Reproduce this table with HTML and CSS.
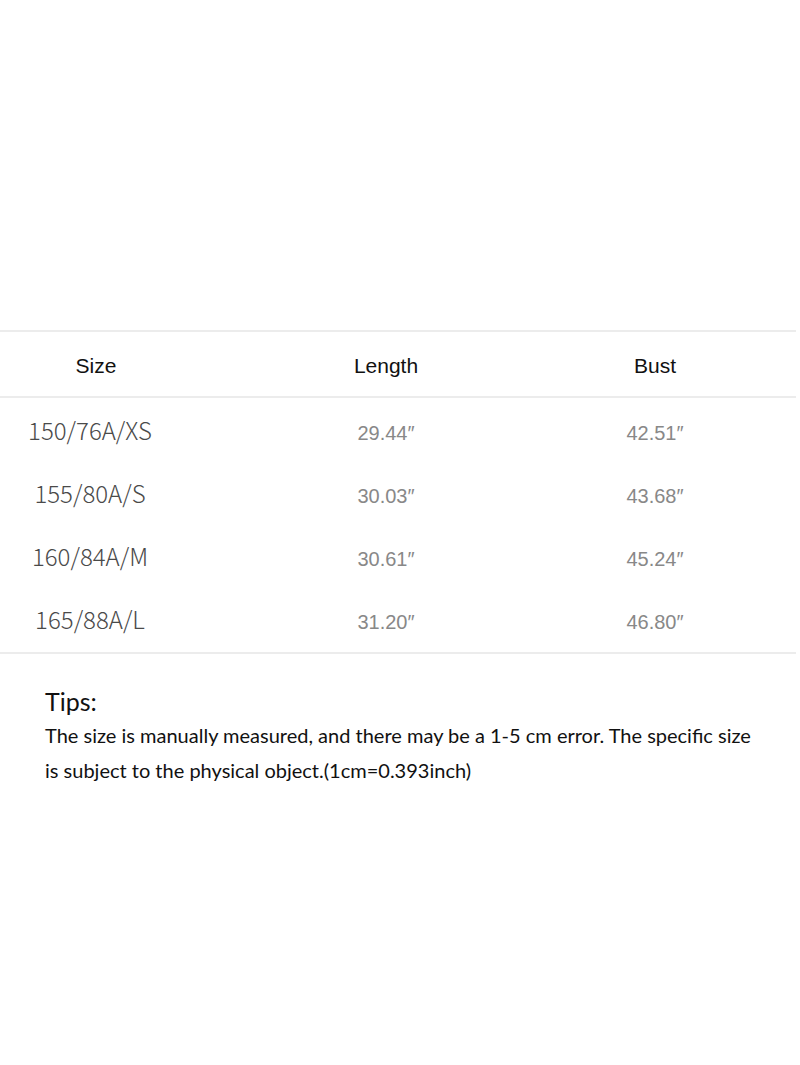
FILE: index.html
```html
<!DOCTYPE html>
<html lang="en">
<head>
<meta charset="utf-8">
<title>Size chart</title>
<link rel="stylesheet" href="styles.css">
</head>
<body>
<main class="page">
  <section class="chart">
    <div class="row head">
      <div class="cell c1">Size</div>
      <div class="cell c2">Length</div>
      <div class="cell c3">Bust</div>
    </div>
    <div class="body">
      <div class="row">
        <div class="cell c1 size">150/76A/XS</div>
        <div class="cell c2 val">29.44&Prime;</div>
        <div class="cell c3 val">42.51&Prime;</div>
      </div>
      <div class="row">
        <div class="cell c1 size">155/80A/S</div>
        <div class="cell c2 val">30.03&Prime;</div>
        <div class="cell c3 val">43.68&Prime;</div>
      </div>
      <div class="row">
        <div class="cell c1 size">160/84A/M</div>
        <div class="cell c2 val">30.61&Prime;</div>
        <div class="cell c3 val">45.24&Prime;</div>
      </div>
      <div class="row">
        <div class="cell c1 size">165/88A/L</div>
        <div class="cell c2 val">31.20&Prime;</div>
        <div class="cell c3 val">46.80&Prime;</div>
      </div>
    </div>
  </section>
  <section class="tips">
    <h2 class="tips-title">Tips:</h2>
    <p class="tips-text">The size is manually measured, and there may be a 1-5 cm error. The specific size is subject to the physical object.(1cm=0.393inch)</p>
  </section>
</main>
</body>
</html>
```

FILE: styles.css
```css
html, body {
  margin: 0;
  padding: 0;
  background: #ffffff;
}
.page {
  width: 800px;
  height: 1065px;
  padding-top: 330px;
  box-sizing: border-box;
}
.chart {
  width: 796px;
  border-top: 2px solid #ececec;
  border-bottom: 2px solid #ececec;
}
.row {
  display: grid;
  grid-template-columns: 192px 388px 150px;
  align-items: center;
}
.head {
  height: 66px;
  border-bottom: 2px solid #ececec;
  font-family: "Liberation Sans", Arial, sans-serif;
  font-size: 21px;
  color: #111;
  padding-top: 3px;
  box-sizing: border-box;
}
.body {
  padding: 2px 0 0;
}
.body .row {
  height: 63px;
}
.cell {
  text-align: center;
}
.size {
  font-family: "Noto Sans CJK SC", "Noto Sans", sans-serif;
  font-size: 24px;
  font-weight: 300;
  color: #4a4a4a;
  padding-right: 12px;
  padding-bottom: 4px;
}
.val {
  font-family: "Liberation Sans", Arial, sans-serif;
  font-size: 20px;
  color: #888;
  padding-top: 4px;
}
.tips {
  padding: 30px 0 0 45px;
  font-family: "Lato", "Noto Sans", sans-serif;
  color: #111;
}
.tips-title {
  margin: 0;
  font-size: 25px;
  font-weight: 400;
  line-height: 34px;
}
.tips-text {
  margin: 0;
  width: 716px;
  font-size: 20px;
  line-height: 35px;
}
```
